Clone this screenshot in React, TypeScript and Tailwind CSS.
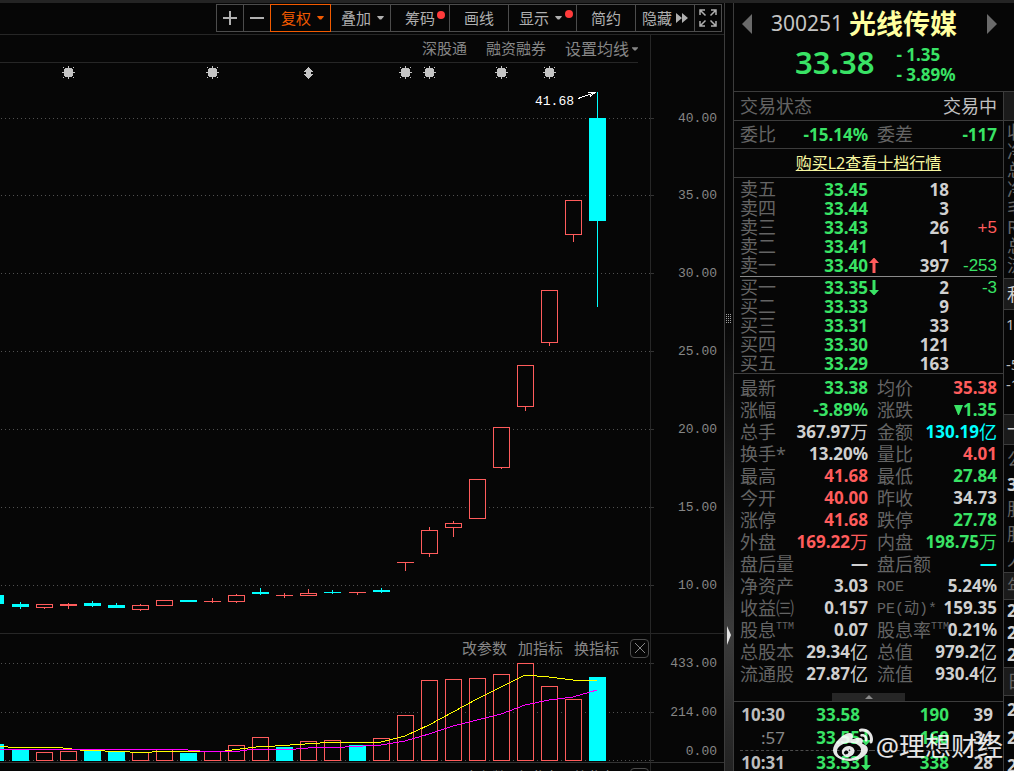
import React from 'react';
import { FaWeibo } from 'react-icons/fa';

interface Candle {
    x: number;
    up: boolean;
    high: number;
    top: number;
    bottom: number;
    low: number;
    volume: number;
}

type Tone = 'up' | 'down' | 'plain' | 'cyan';

interface Quote {
    label: string;
    sup?: string;
    latin?: boolean;
    value: string;
    unit?: string;
    tone: Tone;
}

const RED = '#ff5c5c';
const CYAN = '#00ffff';

const toneClass: Record<Tone, string> = {
    up: 'text-[#ff5c5c]',
    down: 'text-[#39e365]',
    plain: 'text-[#d0d0d0]',
    cyan: 'text-[#00ffff]',
};

// x, up, high, top, bottom, low, volume top
const candles: Candle[] = ([
    [-13, 0, 595, 595, 604, 604, 744],
    [12, 0, 602, 604, 607, 609, 750],
    [36, 1, 604, 604, 608, 609, 752],
    [60, 1, 603, 604, 606, 609, 751],
    [84, 0, 601, 603, 606, 607, 750],
    [108, 0, 603, 605, 608, 608, 751],
    [132, 1, 604, 605, 610, 611, 752],
    [156, 1, 600, 600, 606, 606, 749],
    [180, 0, 600, 600, 602, 602, 753],
    [204, 1, 598, 601, 602, 603, 751],
    [228, 1, 594, 595, 602, 603, 745],
    [252, 0, 588, 592, 594, 595, 737],
    [276, 1, 593, 595, 596, 598, 747],
    [300, 1, 589, 593, 596, 596, 741],
    [324, 0, 590, 592, 593, 594, 740],
    [349, 1, 592, 592, 593, 595, 745],
    [373, 0, 588, 590, 592, 593, 738],
    [397, 1, 562, 562, 563, 571, 715],
    [421, 1, 527, 530, 554, 557, 680],
    [445, 1, 521, 523, 528, 537, 679],
    [469, 1, 479, 479, 519, 519, 678],
    [493, 1, 427, 427, 468, 469, 674],
    [517, 1, 365, 365, 407, 411, 663],
    [541, 1, 290, 290, 343, 346, 686],
    [565, 1, 200, 200, 235, 242, 699],
    [589, 0, 92, 118, 221, 307, 677],
] as const).map(([x, up, high, top, bottom, low, volume]) => ({
    x, up: up === 1, high, top, bottom, low, volume,
}));

// bars whose volume colour differs from the candle colour
const volumeUp = [252, 324, 373];
const volumeDown = [276, 349];

const priceAxis = [
    { y: 118, label: '40.00' },
    { y: 195, label: '35.00' },
    { y: 273, label: '30.00' },
    { y: 351, label: '25.00' },
    { y: 429, label: '20.00' },
    { y: 507, label: '15.00' },
    { y: 585, label: '10.00' },
];

const volumeAxis = [
    { y: 663, textY: 663, label: '433.00' },
    { y: 712, textY: 712, label: '214.00' },
    { y: 760, textY: 751, label: '0.00' },
];

const starXs = [68, 212, 405, 429, 501, 549];

const sells = [
    { label: '卖五', price: '33.45', volume: '18' },
    { label: '卖四', price: '33.44', volume: '3' },
    { label: '卖三', price: '33.43', volume: '26', delta: '+5' },
    { label: '卖二', price: '33.41', volume: '1' },
    { label: '卖一', price: '33.40', volume: '397', delta: '-253', arrow: 'up' },
];

const buys = [
    { label: '买一', price: '33.35', volume: '2', delta: '-3', arrow: 'down' },
    { label: '买二', price: '33.33', volume: '9' },
    { label: '买三', price: '33.31', volume: '33' },
    { label: '买四', price: '33.30', volume: '121' },
    { label: '买五', price: '33.29', volume: '163' },
];

const quotes: [Quote, Quote][] = [
    [{ label: '最新', value: '33.38', tone: 'down' }, { label: '均价', value: '35.38', tone: 'up' }],
    [{ label: '涨幅', value: '-3.89%', tone: 'down' }, { label: '涨跌', value: '▼1.35', tone: 'down' }],
    [{ label: '总手', value: '367.97', unit: '万', tone: 'plain' }, { label: '金额', value: '130.19', unit: '亿', tone: 'cyan' }],
    [{ label: '换手*', value: '13.20%', tone: 'plain' }, { label: '量比', value: '4.01', tone: 'up' }],
    [{ label: '最高', value: '41.68', tone: 'up' }, { label: '最低', value: '27.84', tone: 'down' }],
    [{ label: '今开', value: '40.00', tone: 'up' }, { label: '昨收', value: '34.73', tone: 'plain' }],
    [{ label: '涨停', value: '41.68', tone: 'up' }, { label: '跌停', value: '27.78', tone: 'down' }],
    [{ label: '外盘', value: '169.22', unit: '万', tone: 'up' }, { label: '内盘', value: '198.75', unit: '万', tone: 'down' }],
    [{ label: '盘后量', value: '—', tone: 'plain' }, { label: '盘后额', value: '—', tone: 'cyan' }],
    [{ label: '净资产', value: '3.03', tone: 'plain' }, { label: 'ROE', latin: true, value: '5.24%', tone: 'plain' }],
    [{ label: '收益㈢', value: '0.157', tone: 'plain' }, { label: 'PE(动)*', latin: true, value: '159.35', tone: 'plain' }],
    [{ label: '股息', sup: 'TTM', value: '0.07', tone: 'plain' }, { label: '股息率', sup: 'TTM', value: '0.21%', tone: 'plain' }],
    [{ label: '总股本', value: '29.34', unit: '亿', tone: 'plain' }, { label: '总值', value: '979.2', unit: '亿', tone: 'plain' }],
    [{ label: '流通股', value: '27.87', unit: '亿', tone: 'plain' }, { label: '流值', value: '930.4', unit: '亿', tone: 'plain' }],
];

const ticks = [
    { time: '10:30', price: '33.58', volume: '190', count: '39', full: true },
    { time: ':57', price: '33.55', volume: '160', count: '34', arrow: 'down' },
    { time: '10:31', price: '33.53', volume: '338', count: '28', arrow: 'down', full: true },
];

const Caret: React.FC<{ className?: string }> = ({ className }) => (
    <svg className={className} width="7" height="4" viewBox="0 0 8 5" fill="currentColor">
        <path d="M0 0h8v1L5 4.500H3L0 1z" />
    </svg>
);

const ToolButton: React.FC<{ className: string; label?: string; active?: boolean; children: React.ReactNode }> = ({ className, label, active, children }) => (
    <button
        aria-label={label}
        className={`relative -ml-px flex h-[28px] items-center justify-center border ${active ? 'z-10 border-[#f25a00] text-[#f25a00]' : 'border-[#4c4c4c] text-[#b0b0b0]'} ${className}`}
    >
        {children}
    </button>
);

const Toolbar: React.FC = () => (
    <div className="flex h-[31px] shrink-0 justify-end pt-px pr-[2px] text-[15px]">
        <ToolButton className="w-[28px]" label="放大">
            <svg width="14" height="14" stroke="currentColor" strokeWidth="2"><path d="M0 7h14M7 0v14" /></svg>
        </ToolButton>
        <ToolButton className="w-[28px]" label="缩小">
            <svg width="14" height="14" stroke="currentColor" strokeWidth="2"><path d="M0 7h14" /></svg>
        </ToolButton>
        <ToolButton className="w-[61px] gap-[6px] pl-[4px]" active>复权<Caret /></ToolButton>
        <ToolButton className="w-[61px] gap-[6px] pl-[4px]">叠加<Caret /></ToolButton>
        <ToolButton className="w-[60px]">
            筹码
            <span className="absolute top-[6px] right-[4px] h-2 w-2 rounded-full bg-[#ff3b3b]" />
        </ToolButton>
        <ToolButton className="w-[60px]">画线</ToolButton>
        <ToolButton className="w-[69px] gap-[6px] pr-[4px]">
            显示<Caret />
            <span className="absolute top-[5px] right-[3px] h-2 w-2 rounded-full bg-[#ff3b3b]" />
        </ToolButton>
        <ToolButton className="w-[60px]">简约</ToolButton>
        <ToolButton className="w-[60px] gap-[4px]">
            隐藏
            <svg width="12" height="10" fill="currentColor"><path d="M0 0l6 5-6 5zM6 0l6 5-6 5z" /></svg>
        </ToolButton>
        <ToolButton className="w-[28px]" label="全屏">
            <svg width="18" height="18" fill="none" stroke="currentColor" strokeWidth="1.500">
                <path d="M1 6V1h5M12 1h5v5M17 12v5h-5M6 17H1v-5M1.500 1.500l5 5M16.500 1.500l-5 5M16.500 16.500l-5-5M1.500 16.500l5-5" />
            </svg>
        </ToolButton>
    </div>
);

const Axis: React.FC<{ rows: { y: number; textY?: number; label: string }[] }> = ({ rows }) => (
    <g>
        {rows.map(({ y, textY = y, label }) => (
            <g key={label}>
                <path d={`M1 ${y}.5H650`} stroke="#505050" strokeDasharray="1 3" />
                <path d={`M651 ${y}.5H654`} stroke="#333" />
                <text x="717" y={textY + 4} textAnchor="end" fill="#868686" className="font-['Liberation_Mono',monospace] text-[13px]">{label}</text>
            </g>
        ))}
    </g>
);

const PriceChart: React.FC = () => (
    <svg className="block w-full shrink-0" viewBox="0 63 724 570" preserveAspectRatio="xMaxYMin meet" shapeRendering="crispEdges">
        <Axis rows={priceAxis} />
        <path d="M650.500 63V633" stroke="#262626" />
        {starXs.map((x) => (
            <g key={x} transform={`translate(${x} 72)`} fill="#c4c4c4">
                <path d="M-4-3h9v7h-9zM-3-4h7v9h-7z" />
                <path d="M0-6h1v13h-1zM-6 0h13v1h-13zM-5-5h1v1h-1zM5-5h1v1h-1zM-5 5h1v1h-1zM5 5h1v1h-1z" />
            </g>
        ))}
        <path d="M308 67h1v1h1v1h1v1h1v1h1v1h-2v2h2v1h-1v1h-1v1h-1v1h-1v1h-1v-1h-1v-1h-1v-1h-1v-1h-1v-1h2v-2h-2v-1h1v-1h1v-1h1v-1h1z" fill="#c4c4c4" />
        {candles.map(({ x, up, high, top, bottom, low }) => {
            const color = up ? RED : CYAN;
            return (
                <g key={x} fill={color}>
                    {top > high && <rect x={x + 8} y={high} width="1" height={top - high} />}
                    {low > bottom && <rect x={x + 8} y={bottom} width="1" height={low - bottom} />}
                    {up && bottom - top > 2
                        ? <rect x={x + 0.5} y={top + 0.5} width="16" height={bottom - top - 1} fill="#060606" stroke={color} />
                        : <rect x={x} y={top} width="17" height={bottom - top} />}
                </g>
            );
        })}
        <text x="535" y="105" fill="#fff" className="font-['Liberation_Mono',monospace] text-[13px]">41.68</text>
        <path d="M578 98.500l16-5.500M588 92.500l7 0-5 4" fill="none" stroke="#fff" />
    </svg>
);

const VolumeChart: React.FC = () => (
    <svg className="block w-full shrink-0 overflow-visible" viewBox="0 662 724 100" preserveAspectRatio="xMaxYMin meet" shapeRendering="crispEdges">
        <Axis rows={volumeAxis} />
        <path d="M650.500 662V762" stroke="#262626" />
        {candles.map(({ x, up, volume }) => {
            const hollow = (up && !volumeDown.includes(x)) || volumeUp.includes(x);
            return hollow
                ? <rect key={x} x={x + 0.5} y={volume + 0.5} width="16" height={760 - volume} fill="#060606" stroke={RED} />
                : <rect key={x} x={x} y={volume} width="17" height={761 - volume} fill={CYAN} />;
        })}
        <polyline
            fill="none"
            stroke="#ffff00"
            points="0,746 8,747 50,747 63,748 80,750 105,751 130,752 152,752 155,751 225,751 240,749 256,747 275,746 290,745 305,744 320,743 326,742 381,742 405,736 429,725 453,712 477,699 501,687 525,675 549,677 573,680 597,680"
        />
        <polyline
            fill="none"
            stroke="#ff00ff"
            points="0,749 176,749 200,751 240,751 255,749 296,749 320,747 345,747 381,745 405,741 429,734 453,726 477,720 501,714 525,705 549,700 573,697 597,690"
        />
    </svg>
);

const IndicatorBar: React.FC = () => (
    <div className="flex h-[28px] shrink-0">
        <div className="flex flex-1 items-center justify-end gap-[11px] border-r border-[#262626] pr-px text-[15px] text-[#868686]">
            <button>改参数</button>
            <button>加指标</button>
            <button>换指标</button>
            <button aria-label="关闭" className="flex h-[19px] w-[19px] items-center justify-center rounded-sm border border-[#4c4c4c]">
                <svg width="10" height="10" stroke="currentColor"><path d="M0 0l10 10M10 0L0 10" /></svg>
            </button>
        </div>
        <div className="w-[73px]" />
    </div>
);

const Arrow: React.FC<{ direction?: string }> = ({ direction }) => {
    if (!direction) return null;
    return direction === 'up'
        ? <svg className="mx-auto" width="10" height="15" fill={RED}><path d="M4.500 0h1l4.500 5H6.500v10h-3V5H0z" /></svg>
        : <svg className="mx-auto" width="10" height="15" fill="#39e365"><path d="M4.500 15h1l4.500-5H6.500V0h-3v10H0z" /></svg>;
};

const OrderRows: React.FC<{ rows: { label: string; price: string; volume: string; delta?: string; arrow?: string }[] }> = ({ rows }) => (
    <table className="w-full table-fixed text-right text-[17px] leading-[19px]">
        <tbody>
            {rows.map((row) => (
                <tr key={row.label} className="h-[19px]">
                    <th className="w-[57px] p-0 text-left text-[18px] font-normal text-[#646464]">{row.label}</th>
                    <td className="w-[71px] p-0 font-bold text-[#39e365]">{row.price}</td>
                    <td className="w-[12px] p-0"><Arrow direction={row.arrow} /></td>
                    <td className="p-0 font-bold text-[#d0d0d0]">{row.volume}</td>
                    <td className={`w-[48px] p-0 font-['Liberation_Sans',sans-serif] ${row.delta?.startsWith('+') ? 'text-[#ff5c5c]' : 'text-[#39e365]'}`}>{row.delta}</td>
                </tr>
            ))}
        </tbody>
    </table>
);

const QuoteCells: React.FC<{ quote: Quote; second?: boolean }> = ({ quote, second }) => (
    <>
        <th className={`p-0 text-left font-normal text-[#646464] ${second ? 'pl-[9px]' : ''} ${quote.latin ? "pt-[3px] font-['Liberation_Mono','Noto_Sans_CJK_SC',monospace] text-[15px] leading-[19px]" : 'text-[18px]'}`}>
            {quote.label}
            {quote.sup && <sup className="-top-[8px] font-['Liberation_Mono',monospace] text-[10px]">{quote.sup}</sup>}
        </th>
        <td className={`p-0 font-bold ${toneClass[quote.tone]}`}>
            <span className="flex justify-end">
                {quote.value.startsWith('▼') && <svg className="mt-[6px]" width="9" height="10" fill="currentColor"><path d="M0 0h9L5 10H4z" /></svg>}
                {quote.value.replace('▼', '')}
                {quote.unit && <span className="text-[18px] font-normal">{quote.unit}</span>}
            </span>
        </td>
    </>
);

const QuotePanel: React.FC = () => (
    <div className="flex-1 border-r border-[#3c3c3c] text-[18px] whitespace-nowrap">
        <div className="flex h-[29px] items-center justify-between border-b border-[#3c3c3c] px-[6px]">
            <span className="text-[#646464]">交易状态</span>
            <span className="text-[#c0c0c0]">交易中</span>
        </div>
        <div className="flex h-[28px] items-center border-b border-[#3c3c3c] px-[6px]">
            <span className="text-[#646464]">委比</span>
            <span className="w-[92px] text-right text-[17px] font-bold text-[#39e365]">-15.14%</span>
            <span className="pl-[9px] text-[#646464]">委差</span>
            <span className="ml-auto text-[17px] font-bold text-[#39e365]">-117</span>
        </div>
        <div className="flex h-[29px] items-center justify-center border-b border-[#3c3c3c] text-[16px]">
            <a href="#" className="text-[#f7f7a0] underline">购买L2查看十档行情</a>
        </div>
        <div className="border-b border-[#3c3c3c] px-[6px] pt-[2px]">
            <OrderRows rows={sells} />
            <div className="my-px border-b border-[#8a8a8a]" />
            <OrderRows rows={buys} />
        </div>
        <div className="border-b border-[#3c3c3c]">
            <table className="mx-[6px] mt-[3px] w-[257px] table-fixed text-[17px] leading-[22px]">
                <colgroup>
                    <col className="w-[57px]" />
                    <col className="w-[71px]" />
                    <col className="w-[66px]" />
                    <col />
                </colgroup>
                <tbody>
                    {quotes.map(([left, right]) => (
                        <tr key={left.label} className="h-[22px]">
                            <QuoteCells quote={left} />
                            <QuoteCells quote={right} second />
                        </tr>
                    ))}
                </tbody>
            </table>
            <button aria-label="收起" className="mx-auto mt-[8px] flex h-[8px] w-[73px] items-center justify-center bg-[#262626] text-[#8a8a8a]">
                <svg width="8" height="4" fill="currentColor"><path d="M4 0l4 4H0z" /></svg>
            </button>
        </div>
        <table className="mr-[10px] ml-[6px] w-[253px] table-fixed text-right text-[17px] leading-[23px]">
            <tbody>
                {ticks.map((tick, i) => (
                    <tr key={tick.time} className={`h-[24px] font-bold ${i === 2 ? 'border-t border-dashed border-[#4c4c4c]' : ''}`}>
                        <td className={`w-[45px] p-0 ${tick.full ? 'text-[#bdbdbd]' : 'font-normal text-[#868686]'}`}>{tick.time}</td>
                        <td className="w-[75px] p-0 text-[#39e365]">{tick.price}</td>
                        <td className="w-[12px] p-0"><Arrow direction={tick.arrow} /></td>
                        <td className="p-0 text-[#39e365]">{tick.volume}</td>
                        <td className="w-[44px] p-0 text-[#d0d0d0]">{tick.count}</td>
                    </tr>
                ))}
            </tbody>
        </table>
    </div>
);

const SideHeading: React.FC<{ className: string; children?: React.ReactNode }> = ({ className, children }) => (
    <div className={`flex items-center border-y border-[#3c3c3c] bg-[#1b1b1b] pl-[3px] ${className}`}>{children}</div>
);

const SideStrip: React.FC = () => (
    <div className="w-[11px] overflow-hidden text-[18px] whitespace-nowrap text-[#646464]">
        <SideHeading className="h-[29px] border-t-0" />
        <div className="h-[157px] pt-[2px] pl-[3px] leading-[19px]">
            <p>收益</p>
            <p>净资</p>
            <p>总股</p>
            <p>净利</p>
            <p>毛利</p>
            <p>ROE</p>
            <p>总值</p>
            <p>流值</p>
        </div>
        <SideHeading className="h-[32px] text-[#d0d0d0]">利</SideHeading>
        <div className="h-[104px] pt-[4px] pl-[2px] text-[15px] leading-[20px] text-[#bdbdbd]">
            <p>10</p>
            <p className="mt-[20px]">-5</p>
            <p>-10</p>
        </div>
        <SideHeading className="h-[31px] text-[#d0d0d0]">一</SideHeading>
        <div className="h-[127px] pt-[2px] pl-[3px] leading-[25px]">
            <p>公司</p>
            <p className="font-bold text-[#d0d0d0]">30</p>
            <p>股东</p>
            <p>股本</p>
            <p>人均</p>
        </div>
        <SideHeading className="h-[28px]">年</SideHeading>
        <div className="h-[67px] pl-[3px] text-[17px] leading-[22px] font-bold text-[#d0d0d0]">
            <p>20</p>
            <p>20</p>
            <p>20</p>
        </div>
        <SideHeading className="h-[29px]">日</SideHeading>
        <div className="pl-[3px] text-[17px] leading-[28px] font-bold text-[#d0d0d0]">
            <p>20</p>
            <p>20</p>
            <p>20</p>
        </div>
    </div>
);

const StockHeader: React.FC = () => (
    <div className="h-[89px] shrink-0 border-b border-[#3c3c3c]">
        <div className="flex h-[42px] items-center pr-[17px] pl-[8px]">
            <button aria-label="上一只" className="text-[#6a6a6a]">
                <svg width="10" height="20" fill="currentColor"><path d="M10 0v20L0 10z" /></svg>
            </button>
            <span className="ml-[19px] text-[21px] text-[#c4c4c4]">300251</span>
            <h1 className="ml-[6px] text-[27px] font-bold text-[#ffffa0]">光线传媒</h1>
            <button aria-label="下一只" className="ml-auto text-[#6a6a6a]">
                <svg width="10" height="20" fill="currentColor"><path d="M0 0v20l10-10z" /></svg>
            </button>
        </div>
        <div className="flex items-start pl-[61px] text-[#39e365]">
            <span className="text-[31px] leading-[34px] font-semibold">33.38</span>
            <div className="ml-[22px] text-[17px] leading-[20px] font-bold">
                <p>- 1.35</p>
                <p>- 3.89%</p>
            </div>
        </div>
    </div>
);

const App: React.FC = () => (
    <div className="relative flex h-screen overflow-hidden border-t-[3px] border-[#242424] bg-[#060606] font-['Noto_Sans','Noto_Sans_CJK_SC',sans-serif]">
        <div className="flex min-w-0 flex-1 flex-col">
            <Toolbar />
            <div className="flex h-[29px] shrink-0 border-t border-[#262626]">
                <div className="flex-1 border-r border-[#262626] pr-[12px]">
                    <div className="flex h-[28px] items-center justify-end gap-[19px] border-b border-[#262626] text-[15px] text-[#868686]">
                        <a href="#">深股通</a>
                        <a href="#">融资融券</a>
                        <button className="flex items-center gap-[3px] text-[16px]">设置均线<Caret className="w-[6px]" /></button>
                    </div>
                </div>
                <div className="w-[73px]" />
            </div>
            <PriceChart />
            <div className="shrink-0 border-t border-[#262626]" />
            <IndicatorBar />
            <VolumeChart />
            <div className="shrink-0 border-t border-[#333]" />
            <IndicatorBar />
        </div>

        <div className="relative w-[10px] shrink-0 border-x border-[#3c3c3c] bg-linear-to-b from-transparent from-40% via-[#3c3c3c] via-82% to-[#222]">
            <svg className="absolute top-[311px] left-px" width="6" height="10" stroke="#a0a0a0" strokeDasharray="1 1" shapeRendering="crispEdges">
                <path d="M.5 0v10M2.500 0v10M4.500 0v10" />
            </svg>
            <svg className="absolute top-[623px] left-[2px]" width="5" height="19" fill="#e4e4e4"><path d="M0 0l4 9-4 10z" /></svg>
        </div>

        <div className="flex w-[280px] shrink-0 flex-col">
            <StockHeader />
            <div className="flex flex-1">
                <QuotePanel />
                <SideStrip />
            </div>
        </div>

        <div className="absolute right-[11px] bottom-[5px] flex items-center gap-[3px] text-[26px] leading-[34px] text-white/90">
            <FaWeibo size={40} />
            @理想财经
        </div>
    </div>
);

export default App;
